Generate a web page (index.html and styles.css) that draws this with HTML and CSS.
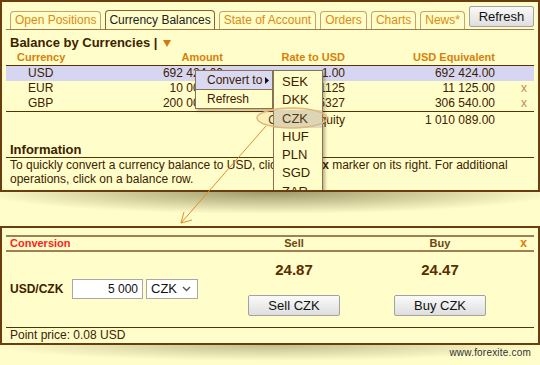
FILE: index.html
```html
<!DOCTYPE html>
<html>
<head>
<meta charset="utf-8">
<link rel="stylesheet" href="styles.css">
</head>
<body>
<div class="panel panel-top">
  <div class="tabbar">
    <div class="tab">Open Positions</div>
    <div class="tab active">Currency Balances</div>
    <div class="tab">State of Account</div>
    <div class="tab">Orders</div>
    <div class="tab">Charts</div>
    <div class="tab">News*</div>
    <div class="btn refresh">Refresh</div>
  </div>
  <div class="section-title">Balance by Currencies | <svg class="caret" width="8" height="7" viewBox="0 0 8 7"><polygon points="0,0 8,0 4,7" fill="#d27a10"/></svg></div>
  <div class="cols head">
    <div class="c1">Currency</div>
    <div class="num">Amount</div>
    <div class="num">Rate to USD</div>
    <div class="num">USD Equivalent</div>
    <div></div>
  </div>
  <div class="rows">
    <div class="cols row sel">
      <div class="c1">USD</div><div class="num">692 424.00</div><div class="num">1.00</div><div class="num">692 424.00</div><div></div>
    </div>
    <div class="cols row">
      <div class="c1">EUR</div><div class="num">10 000.00</div><div class="num">1.1125</div><div class="num">11 125.00</div><div class="xm">x</div>
    </div>
    <div class="cols row">
      <div class="c1">GBP</div><div class="num">200 000.00</div><div class="num">1.5327</div><div class="num">306 540.00</div><div class="xm">x</div>
    </div>
  </div>
  <div class="cols row total">
    <div class="c1"></div><div></div><div class="num">Current Equity</div><div class="num">1 010 089.00</div><div></div>
  </div>
  <div class="info-title">Information</div>
  <div class="info-text">To quickly convert a currency balance to USD, click on the <b>x</b> marker on its right. For additional operations, click on a balance row.</div>

  <div class="menu">
    <div class="mi hl">Convert to<svg class="tri" width="4" height="7" viewBox="0 0 4 7"><polygon points="0,0 4,3.5 0,7" fill="#111"/></svg></div>
    <div class="msep"></div>
    <div class="mi">Refresh</div>
  </div>
  <div class="submenu">
    <div class="si">SEK</div>
    <div class="si">DKK</div>
    <div class="si hl2">CZK</div>
    <div class="si">HUF</div>
    <div class="si">PLN</div>
    <div class="si">SGD</div>
    <div class="si">ZAR</div>
  </div>
</div>
<div class="shadow-gap"></div>
<div class="panel panel-bottom">
  <div class="conv-head grid5">
    <div class="ch-title">Conversion</div>
    <div class="ch-col">Sell</div>
    <div></div>
    <div class="ch-col">Buy</div>
    <div class="ch-x">x</div>
  </div>
  <div class="conv-body grid5">
    <div class="pair">
      <span class="pair-label">USD/CZK</span>
      <span class="amount">5 000</span>
      <span class="select">CZK<svg class="chev" width="9" height="6" viewBox="0 0 9 6"><polyline points="1,1 4.5,4.5 8,1" fill="none" stroke="#555" stroke-width="1.4"/></svg></span>
    </div>
    <div class="price sell-price">24.87</div>
    <div class="price buy-price">24.47</div>
    <div class="btn trade sell-btn">Sell CZK</div>
    <div class="btn trade buy-btn">Buy CZK</div>
  </div>
  <div class="conv-foot">Point price: 0.08 USD</div>
</div>
<div class="bottom-shadow">www.forexite.com</div>

<svg class="callout" width="540" height="365" viewBox="0 0 540 365">
  <ellipse cx="292" cy="118" rx="35" ry="10" fill="rgba(225,180,110,0.16)" stroke="#e3b67a" stroke-width="1.5"/>
  <line x1="266" y1="126" x2="181" y2="223" stroke="#e58a2a" stroke-width="1"/>
  <polyline points="184,212 181,223 192,220" fill="none" stroke="#e58a2a" stroke-width="1"/>
</svg>
</body>
</html>
```
FILE: styles.css
```css
body {
  margin: 0;
  width: 540px;
  height: 365px;
  overflow: hidden;
  position: relative;
  background: #fffdc9;
  font-family: "Liberation Sans", Arial, sans-serif;
  color: #3d2200;
}

.panel {
  box-sizing: border-box;
  border: 2px solid #6b3c0e;
  background: #fffdc9;
  padding: 0 4px;
}

.panel-top {
  height: 192px;
  position: relative;
  overflow: hidden;
}

/* tabs */
.tabbar {
  display: flex;
  align-items: flex-end;
  gap: 4px;
  height: 28px;
  box-sizing: border-box;
  padding-left: 4px;
  padding-right: 6px;
  border-bottom: 1px solid #a07848;
}

.tab {
  flex-shrink: 0;
  white-space: nowrap;
  height: 18px;
  box-sizing: border-box;
  padding: 0 4px;
  border: 1px solid #c9a26c;
  border-bottom: none;
  border-radius: 4px 4px 0 0;
  font-size: 12px;
  line-height: 17px;
  color: #de8a12;
}

.tab.active {
  height: 19px;
  border-color: #8a6232;
  color: #222;
  line-height: 18px;
  padding: 0 3px;
}

.btn {
  box-sizing: border-box;
  border: 1px solid #a2a2a2;
  border-radius: 2px;
  background: linear-gradient(#fafafa, #dedede);
  color: #111;
  font-size: 13px;
  text-align: center;
  white-space: nowrap;
}

.refresh {
  flex-shrink: 0;
  margin-left: auto;
  margin-bottom: 2px;
  width: 65px;
  height: 21px;
  line-height: 19px;
}

.section-title {
  margin-top: 5px;
  padding-left: 4px;
  font-size: 13px;
  font-weight: bold;
  line-height: 16px;
  color: #3d2200;
}

.caret {
  vertical-align: 0px;
  margin-left: 2px;
}

/* table */
.cols {
  display: grid;
  grid-template-columns: 144px 73px 122px 150px 39px;
}

.num { text-align: right; white-space: nowrap; }

.head {
  height: 14px;
  line-height: 13px;
  font-size: 11px;
  font-weight: bold;
  color: #d9800a;
  border-bottom: 1px solid #5a3200;
}

.head .c1 { padding-left: 11px; }

.rows { border-bottom: 1px solid #5a3200; }

.row {
  height: 15px;
  line-height: 15px;
  font-size: 12px;
  color: #3d2200;
}

.row .c1 { padding-left: 22px; }

.row.sel { background: #d6d6f2; }

.row.total { height: 16px; line-height: 16px; }

.xm {
  padding-left: 26px;
  color: #c48a50;
}

.info-title {
  margin-top: 14px;
  padding-left: 4px;
  font-size: 13px;
  font-weight: bold;
  line-height: 15px;
  border-bottom: 1px solid #5a3200;
}

.info-text {
  padding-left: 4px;
  font-size: 12px;
  line-height: 14px;
}

/* context menu */
.menu {
  position: absolute;
  left: 193px;
  top: 68px;
  width: 78px;
  box-sizing: border-box;
  border: 1px solid #8a7352;
  background: #fffdc9;
  box-shadow: 2px 2px 3px rgba(60, 40, 10, 0.35);
}

.mi {
  height: 18px;
  line-height: 18px;
  padding-left: 11px;
  font-size: 12px;
  color: #3d2200;
  position: relative;
  white-space: nowrap;
}

.mi.hl { background: #d9d9f4; }

.tri {
  position: absolute;
  right: 3px;
  top: 6px;
}

.msep { height: 1px; background: #8a7352; }

.submenu {
  position: absolute;
  left: 271px;
  top: 68px;
  width: 50px;
  height: 200px;
  box-sizing: border-box;
  border: 1px solid #8a7352;
  padding-top: 2px;
  background: #fffdc9;
  box-shadow: 2px 2px 3px rgba(60, 40, 10, 0.35);
}

.si {
  height: 18.3px;
  line-height: 18px;
  padding-left: 8px;
  font-size: 13px;
  color: #3d2200;
}

.si.hl2 { background: #dcdcc4; }

/* shadow */
.shadow-gap {
  height: 34px;
  background: radial-gradient(ellipse 290px 22px at 270px 0px, rgba(80, 70, 25, 0.55), rgba(80, 70, 25, 0) 100%);
}

/* bottom panel */
.grid5 {
  display: grid;
  grid-template-columns: 234px 108px 38px 108px 40px;
}

.conv-head {
  margin-top: 7px;
  border-top: 2px solid #a08052;
  border-bottom: 2px solid #a08052;
  height: 17px;
  box-sizing: border-box;
  line-height: 13px;
  font-size: 11px;
  font-weight: bold;
}

.ch-title { color: #ff2121; padding-left: 4px; }
.ch-col { color: #6e4512; text-align: center; }
.ch-x { color: #e07a00; text-align: right; padding-right: 7px; font-size: 12px; }

.conv-body {
  margin-top: 9px;
  grid-template-rows: 18px 21px;
  row-gap: 16px;
}

.pair {
  grid-column: 1;
  grid-row: 1 / 3;
  align-self: center;
  display: flex;
  align-items: center;
  padding-left: 4px;
  margin-top: 1px;
}

.pair-label {
  font-size: 12px;
  font-weight: bold;
  width: 62px;
}

.amount {
  box-sizing: border-box;
  width: 71px;
  height: 20px;
  border: 1px solid #a8a8a8;
  background: #fff;
  text-align: right;
  padding-right: 4px;
  font-size: 12px;
  line-height: 18px;
  color: #111;
}

.select {
  box-sizing: border-box;
  margin-left: 3px;
  width: 52px;
  height: 20px;
  border: 1px solid #a8a8a8;
  background: #fff;
  padding-left: 4px;
  font-size: 13px;
  line-height: 18px;
  color: #111;
  display: flex;
  align-items: center;
  justify-content: space-between;
  padding-right: 6px;
}

.price {
  text-align: center;
  font-size: 15px;
  font-weight: bold;
  line-height: 18px;
  color: #5a2e00;
}

.sell-price { grid-column: 2; grid-row: 1; }
.buy-price { grid-column: 4; grid-row: 1; }

.trade {
  width: 92px;
  height: 21px;
  line-height: 19px;
  justify-self: center;
}

.sell-btn { grid-column: 2; grid-row: 2; }
.buy-btn { grid-column: 4; grid-row: 2; }

.conv-foot {
  margin-top: 11px;
  border-top: 1px solid #5a3200;
  padding-left: 4px;
  font-size: 12px;
  line-height: 15px;
}

.bottom-shadow {
  height: 20px;
  line-height: 16px;
  text-align: right;
  padding-right: 9px;
  font-size: 10px;
  letter-spacing: 0.2px;
  color: #333;
  background: radial-gradient(ellipse 280px 16px at 270px 0px, rgba(80, 70, 25, 0.35), rgba(80, 70, 25, 0) 100%);
}

.callout {
  position: absolute;
  left: 0;
  top: 0;
  pointer-events: none;
}
```
